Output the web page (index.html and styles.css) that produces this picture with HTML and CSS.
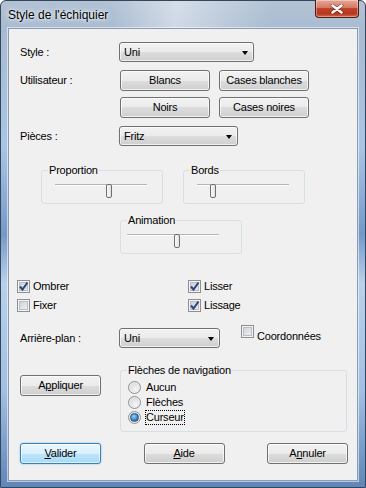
FILE: index.html
```html
<!DOCTYPE html>
<html lang="fr">
<head>
  <meta charset="UTF-8" />
  <title>Style de l'échiquier</title>
  <link rel="stylesheet" href="styles.css">
</head>
<body>
  <div class="window">
    <div class="titlebar">
      <span class="title">Style de l'échiquier</span>
      <span class="close">
        <svg width="14" height="10" viewBox="0 0 14 10">
          <path d="M2.5 1.5 L11.5 8.5 M11.5 1.5 L2.5 8.5" stroke="#4a1a10" stroke-width="4" stroke-linecap="round" opacity="0.5"/>
          <path d="M2.5 1.5 L11.5 8.5 M11.5 1.5 L2.5 8.5" stroke="#fff" stroke-width="2.4" stroke-linecap="round"/>
        </svg>
      </span>
    </div>

    <div class="client">
      <div class="field f-style">
        <span class="lbl">Style :</span>
        <div class="combo combo-style">Uni<i class="arrow"></i></div>
      </div>

      <div class="field f-user">
        <span class="lbl">Utilisateur :</span>
        <button class="btn btn-user">Blancs</button>
        <button class="btn btn-user">Cases blanches</button>
      </div>
      <div class="field f-user2">
        <span class="lbl"></span>
        <button class="btn btn-user">Noirs</button>
        <button class="btn btn-user">Cases noires</button>
      </div>

      <div class="field f-pieces">
        <span class="lbl">Pièces :</span>
        <div class="combo combo-pieces">Fritz<i class="arrow"></i></div>
      </div>

      <div class="groups">
        <fieldset class="group g-prop">
          <legend>Proportion</legend>
          <div class="slider"><div class="track"></div><span class="thumb" style="left:51px"></span></div>
        </fieldset>
        <fieldset class="group g-bords">
          <legend>Bords</legend>
          <div class="slider"><div class="track"></div><span class="thumb" style="left:13px"></span></div>
        </fieldset>
      </div>

      <fieldset class="group g-anim">
        <legend>Animation</legend>
        <div class="slider"><div class="track"></div><span class="thumb" style="left:47px"></span></div>
      </fieldset>

      <div class="checks">
        <label class="check"><span class="box checked"><svg width="11" height="11" viewBox="0 0 11 11"><path d="M2 5.5 L4.5 8.5 L9.5 1.5" fill="none" stroke="#2f4578" stroke-width="2"/></svg></span>Ombrer</label>
        <label class="check"><span class="box checked"><svg width="11" height="11" viewBox="0 0 11 11"><path d="M2 5.5 L4.5 8.5 L9.5 1.5" fill="none" stroke="#2f4578" stroke-width="2"/></svg></span>Lisser</label>
        <label class="check"><span class="box"></span>Fixer</label>
        <label class="check"><span class="box checked"><svg width="11" height="11" viewBox="0 0 11 11"><path d="M2 5.5 L4.5 8.5 L9.5 1.5" fill="none" stroke="#2f4578" stroke-width="2"/></svg></span>Lissage</label>
      </div>

      <div class="field f-bg">
        <span class="lbl">Arrière-plan :</span>
        <div class="combo combo-bg">Uni<i class="arrow"></i></div>
        <label class="check check-coord"><span class="box"></span><span class="coord-text">Coordonnées</span></label>
      </div>

      <div class="apply-row">
        <button class="btn btn-apply">A<u>p</u>pliquer</button>
        <fieldset class="group g-nav">
          <legend>Flèches de navigation</legend>
          <label class="radio"><span class="dot"></span>Aucun</label>
          <label class="radio"><span class="dot"></span>Flèches</label>
          <label class="radio"><span class="dot on"></span><span class="focus">Curseur</span></label>
        </fieldset>
      </div>

      <div class="actions">
        <button class="btn btn-default"><u>V</u>alider</button>
        <button class="btn"><u>A</u>ide</button>
        <button class="btn">A<u>n</u>nuler</button>
      </div>
    </div>
  </div>
</body>
</html>
```

FILE: styles.css
```css
/* Base */
* {
  box-sizing: border-box;
}
body {
  margin: 0;
  font-family: "Liberation Sans", Arial, sans-serif;
  font-size: 11px;
  line-height: 13px;
  letter-spacing: -0.2px;
  color: #000;
}

/* Aero window frame */
.window {
  width: 366px;
  height: 488px;
  border: 1px solid #34465a;
  border-radius: 6px 6px 0 0;
  background:
    linear-gradient(90deg, rgba(255,255,255,0) 30%, rgba(255,255,255,.45) 48%, rgba(255,255,255,.2) 62%, rgba(255,255,255,0) 75%) top / 100% 28px no-repeat,
    linear-gradient(180deg, #b3c3d5 0, #a8bbd1 28px, #a9c5e6 30%, #7499c8 48%, #b8d1ec 58%, #a2c0e3 80%, #5f86b8 100%);
  display: flex;
  flex-direction: column;
}

.titlebar {
  height: 27px;
  display: flex;
  justify-content: space-between;
  align-items: flex-start;
}
.title {
  padding: 7px 0 0 7px;
  font-size: 12px;
  line-height: 14px;
  letter-spacing: 0;
  text-shadow: 0 0 6px #fff, 0 0 3px #fff;
}
.close {
  width: 44px;
  height: 18px;
  margin: -1px 6px 0 0;
  border: 1px solid #4f1a10;
  border-top: none;
  border-radius: 0 0 4px 4px;
  background: linear-gradient(180deg, #e6a898 0, #d67a62 45%, #c0432a 50%, #b8361e 80%, #d0684a 100%);
  box-shadow: inset 0 0 0 1px rgba(255,255,255,.35);
  display: flex;
  align-items: center;
  justify-content: center;
}

/* Client area */
.client {
  margin: 0 7px;
  height: 453px;
  border: 1px solid #8b9bb0;
  box-shadow: 0 0 0 1px rgba(255,255,255,.55);
  background: #f0f0f0;
  padding-left: 11px;
  display: flex;
  flex-direction: column;
  align-items: flex-start;
}

.field {
  display: flex;
  align-items: center;
}
.lbl {
  width: 99px;
  flex: none;
}
.f-style { margin-top: 13px; }
.f-user { margin-top: 8px; }
.f-user2 { margin-top: 6px; }
.f-pieces { margin-top: 8px; }
.f-bg { margin-top: 16px; }

/* Combo boxes and buttons */
.combo,
.btn {
  height: 20px;
  border: 1px solid #707070;
  border-radius: 3px;
  background: linear-gradient(180deg, #f2f2f2 0, #ebebeb 50%, #dddddd 50%, #cfcfcf 100%);
  box-shadow: inset 0 0 0 1px rgba(255,255,255,.7);
}
.combo {
  position: relative;
  padding-left: 4px;
  display: flex;
  align-items: center;
}
.arrow {
  position: absolute;
  right: 5px;
  top: 8px;
  border-left: 3.5px solid transparent;
  border-right: 3.5px solid transparent;
  border-top: 4px solid #000;
}
.combo-style { width: 135px; }
.combo-pieces { width: 119px; }
.combo-bg { width: 101px; }

.btn {
  height: 21px;
  width: 81px;
  padding: 0;
  font: inherit;
  letter-spacing: inherit;
  color: #000;
  text-align: center;
}
.btn-user {
  width: 90px;
  margin-left: 1px;
}
.btn-user + .btn-user {
  margin-left: 9px;
}
.btn-default {
  border-color: #3c7fb1;
  background: linear-gradient(180deg, #eaf6fd 0, #d9f0fc 50%, #bee6fd 50%, #a7d9f5 100%);
  box-shadow: inset 0 0 0 1px rgba(255,255,255,.6), 0 0 2px #6cc5f0;
}

/* Group boxes with sliders */
.group {
  margin: 0;
  padding: 0 6px;
  border: 1px solid #d5dfe5;
  border-radius: 3px;
  min-width: 0;
}
.group legend {
  padding: 0 1px;
  line-height: 13px;
}
.groups {
  display: flex;
  margin-top: 18px;
  margin-left: 21px;
  gap: 20px;
}
.g-prop,
.g-bords,
.g-anim {
  width: 122px;
  height: 40px;
}
.g-prop .slider,
.g-bords .slider {
  margin-left: 7px;
}
.g-anim {
  margin-top: 10px;
  margin-left: 100px;
}

.slider {
  position: relative;
  width: 92px;
  height: 14px;
  margin-top: 3px;
}
.track {
  margin-top: 7px;
  height: 1px;
  background: #b4b4b4;
  box-shadow: 0 1px 0 #fff;
}
.thumb {
  position: absolute;
  top: 0;
  width: 6px;
  height: 14px;
  border: 1px solid #6f6f6f;
  border-radius: 2px;
  background: linear-gradient(90deg, #fbfbfb, #e2e2e2);
}

/* Check boxes */
.checks {
  display: grid;
  grid-template-columns: 171px auto;
  row-gap: 6px;
  margin-top: 26px;
  margin-left: -3px;
}
.check {
  display: flex;
  align-items: center;
  gap: 3px;
  height: 13px;
}
.box {
  width: 13px;
  height: 13px;
  flex: none;
  border: 1px solid #8e8f8f;
  background: linear-gradient(135deg, #c7ccd3, #f6f6f6);
  box-shadow: inset 0 0 0 1px #f4f4f4, inset 0 0 0 2px #b9bec6;
  display: flex;
  align-items: center;
  justify-content: center;
}
.box.checked {
  background: linear-gradient(135deg, #c0cbd9, #eef2f7);
}
.check-coord {
  align-self: flex-start;
  align-items: flex-start;
  height: auto;
  margin-left: 21px;
  margin-top: -3px;
}
.coord-text {
  margin-top: 5px;
}

/* Navigation arrows group */
.apply-row {
  display: flex;
  align-items: flex-start;
}
.btn-apply {
  margin-top: 27px;
}
.g-nav {
  width: 227px;
  height: 68px;
  margin-top: 16px;
  margin-left: 19px;
  padding-top: 3px;
}
.radio {
  display: flex;
  align-items: center;
  gap: 5px;
  height: 15px;
  margin-left: 1px;
}
.dot {
  width: 13px;
  height: 13px;
  border-radius: 50%;
  border: 1px solid #8e8f8f;
  background: radial-gradient(circle at 60% 65%, #f6f6f6, #c9ced5);
  box-shadow: inset 0 0 0 1px #f0f0f0;
  display: flex;
  align-items: center;
  justify-content: center;
}
.dot.on::after {
  content: "";
  width: 7px;
  height: 7px;
  border-radius: 50%;
  border: 1px solid #1f4f80;
  background: radial-gradient(circle at 40% 35%, #9ad3f6, #2a74b8 70%);
}
.focus {
  outline: 1px dotted #000;
  outline-offset: 0;
}

/* Dialog buttons */
.actions {
  display: flex;
  justify-content: space-between;
  width: 328px;
  margin-top: 11px;
}
u {
  text-decoration-thickness: 1px;
  text-underline-offset: 1px;
}
```
